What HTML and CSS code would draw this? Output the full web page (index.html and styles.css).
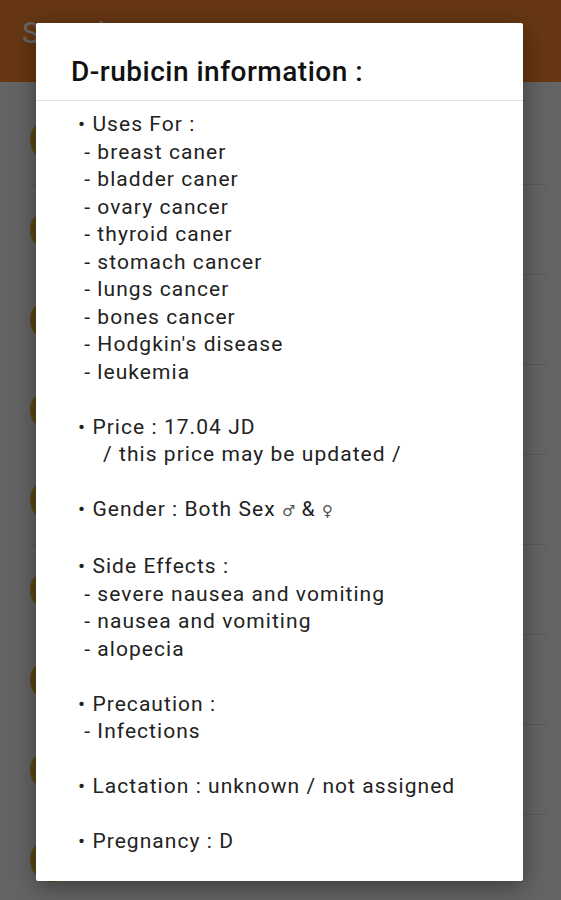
FILE: index.html
```html
<!DOCTYPE html>
<html lang="en">
<head>
    <meta charset="UTF-8">
    <meta name="viewport" content="width=device-width, initial-scale=1.0">
    <title>D-rubicin information</title>
    <link rel="stylesheet" href="styles.css">
</head>
<body>
    <div id="app">
        <div class="toolbar"><span class="toolbar-title">Search</span></div>
        <div class="drug-list">
            <div class="drug-item"><span class="avatar"></span></div>
            <div class="drug-item"><span class="avatar"></span></div>
            <div class="drug-item"><span class="avatar"></span></div>
            <div class="drug-item"><span class="avatar"></span></div>
            <div class="drug-item"><span class="avatar"></span></div>
            <div class="drug-item"><span class="avatar"></span></div>
            <div class="drug-item"><span class="avatar"></span></div>
            <div class="drug-item"><span class="avatar"></span></div>
            <div class="drug-item"><span class="avatar"></span></div>
        </div>
    </div>

    <div class="scrim"></div>

    <div class="dialog">
        <div class="dialog-title">D-rubicin information :</div>
        <div class="dialog-body">• Uses For :
 - breast caner
 - bladder caner
 - ovary cancer
 - thyroid caner
 - stomach cancer
 - lungs cancer
 - bones cancer
 - Hodgkin's disease
 - leukemia

• Price : 17.04 JD
    / this price may be updated /

• Gender : Both Sex <span class="sym">♂</span> &amp; <span class="sym">♀</span>

• Side Effects :
 - severe nausea and vomiting
 - nausea and vomiting
 - alopecia

• Precaution :
 - Infections

• Lactation : unknown / not assigned

• Pregnancy : D</div>
    </div>
</body>
</html>
```

FILE: styles.css
```css
html,body{margin:0;padding:0}
body{font-family:Roboto,"Noto Sans",sans-serif;background:#fafafa;width:561px;height:900px;overflow:hidden;position:relative}
.toolbar{height:82px;background:#ff8a2e;display:flex;align-items:center;padding-left:22px;box-sizing:border-box}
.toolbar-title{color:#fff;font-size:30px;margin-top:-18px}
.drug-list{padding:0 16px 0 30px}
.drug-item{height:89px;border-bottom:1px solid #ddd;display:flex;align-items:center}
.drug-item:first-child{height:103px;padding-top:14px;box-sizing:border-box}
.avatar{width:44px;height:44px;border-radius:50%;background:#e2b233}
.scrim{position:absolute;inset:0;background:rgba(0,0,0,0.6)}
.dialog{position:absolute;left:36px;top:23px;width:487px;height:858px;background:#fff;border-radius:2px;box-shadow:0 6px 24px rgba(0,0,0,0.4)}
.dialog-title{height:78px;box-sizing:border-box;padding:34px 0 0 35px;font-size:28px;line-height:30px;letter-spacing:0.5px;color:#111;border-bottom:1px solid #e3e3e3;font-weight:500}
.dialog-body{white-space:pre;padding:10px 0 0 42px;font-size:21px;line-height:27.5px;letter-spacing:1.05px;color:#222}
.sym{font-size:15px;letter-spacing:0;font-family:"DejaVu Sans",sans-serif;color:#555}
```
